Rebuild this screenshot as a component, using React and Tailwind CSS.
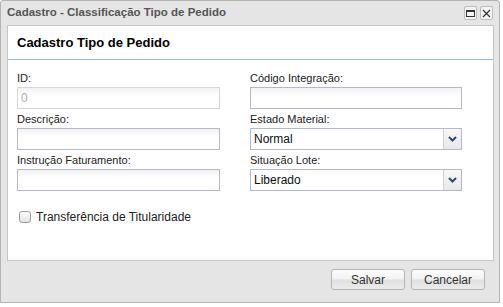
import React from "react";

const font = { fontFamily: '"Liberation Sans", Arial, sans-serif' };

function Label({ children }) {
  return (
    <div className="h-[19px] pt-[3px] text-[11px] leading-[14px] text-[#222]">{children}</div>
  );
}

function TextInput({ w, value, disabled }) {
  return (
    <div
      className={`h-[22px] ${w} border ${
        disabled ? "border-[#d6d6d6] text-[#b0b0b0]" : "border-[#b5b8c8] text-[#222]"
      } bg-gradient-to-b from-[#f2f2f2] to-white to-[40%] px-[3px] text-[12px] leading-[20px]`}
    >
      {value}
    </div>
  );
}

function Select({ value }) {
  return (
    <div className="flex h-[22px] w-[212px] border border-[#b5b8c8] bg-white">
      <div className="flex-1 px-[3px] text-[12px] leading-[20px] text-[#111]">{value}</div>
      <div className="flex w-[18px] items-center justify-center border-l border-[#d0d0d0] bg-gradient-to-b from-[#f8f8f8] to-[#e8e8e8]">
        <svg width="9" height="6" viewBox="0 0 9 6">
          <path d="M1 1 L4.5 4.5 L8 1" fill="none" stroke="#2d4b7a" strokeWidth="2" />
        </svg>
      </div>
    </div>
  );
}

function Button({ children }) {
  return (
    <div className="flex h-[21px] w-[74px] items-center justify-center rounded-[3px] border border-[#b4b4b4] bg-[linear-gradient(#fcfcfc_0%,#f2f2f2_48%,#e0e0e0_52%,#ebebeb_100%)] text-[12px] text-[#333]">
      {children}
    </div>
  );
}

export default function App() {
  return (
    <div className="h-[307px] w-[503px] bg-white" style={font}>
      <div className="flex h-[303px] w-[500px] flex-col rounded-t-[3px] border border-[#b3b3b3] bg-[#e5e5e5]">
        {/* title bar */}
        <div className="flex h-[24px] items-center justify-between pl-[6px] pr-[6px]">
          <span className="text-[11.5px] font-bold text-[#555]">Cadastro - Classificação Tipo de Pedido</span>
          <div className="flex gap-[3px]">
            <div className="flex h-[14px] w-[13px] items-center justify-center rounded-[2px] border border-[#bdbdbd] bg-[#f4f4f4]">
              <div className="h-[7px] w-[9px] border border-[#333] border-t-[2px]" />
            </div>
            <div className="flex h-[14px] w-[13px] items-center justify-center rounded-[2px] border border-[#bdbdbd] bg-[#f4f4f4]">
              <svg width="9" height="9" viewBox="0 0 9 9">
                <path d="M1 1 L8 8 M8 1 L1 8" stroke="#333" strokeWidth="1.2" />
              </svg>
            </div>
          </div>
        </div>
        {/* panel */}
        <div className="ml-[6px] flex h-[236px] w-[487px] flex-col border border-[#c6c6c6] bg-white">
          <div className="flex h-[34px] items-center border-b border-[#99bbe8] pl-[9px] pt-[1px] text-[13px] font-bold text-black">
            Cadastro Tipo de Pedido
          </div>
          <div className="flex pl-[9px] pt-[8px]">
            <div className="flex w-[233px] flex-col">
              <Label>ID:</Label>
              <TextInput w="w-[203px]" value="0" disabled />
              <Label>Descrição:</Label>
              <TextInput w="w-[203px]" />
              <Label>Instrução Faturamento:</Label>
              <TextInput w="w-[203px]" />
            </div>
            <div className="flex flex-col">
              <Label>Código Integração:</Label>
              <TextInput w="w-[212px]" />
              <Label>Estado Material:</Label>
              <Select value="Normal" />
              <Label>Situação Lote:</Label>
              <Select value="Liberado" />
            </div>
          </div>
          <div className="flex items-center pl-[11px] pt-[17px]">
            <div className="h-[12px] w-[12px] rounded-[3px] border border-[#9a9a9a] bg-gradient-to-b from-white to-[#e2e2e2]" />
            <span className="ml-[5px] text-[12px] text-[#222]">Transferência de Titularidade</span>
          </div>
        </div>
        {/* footer */}
        <div className="flex justify-end gap-[6px] pr-[14px] pt-[8px]">
          <Button>Salvar</Button>
          <Button>Cancelar</Button>
        </div>
      </div>
    </div>
  );
}
